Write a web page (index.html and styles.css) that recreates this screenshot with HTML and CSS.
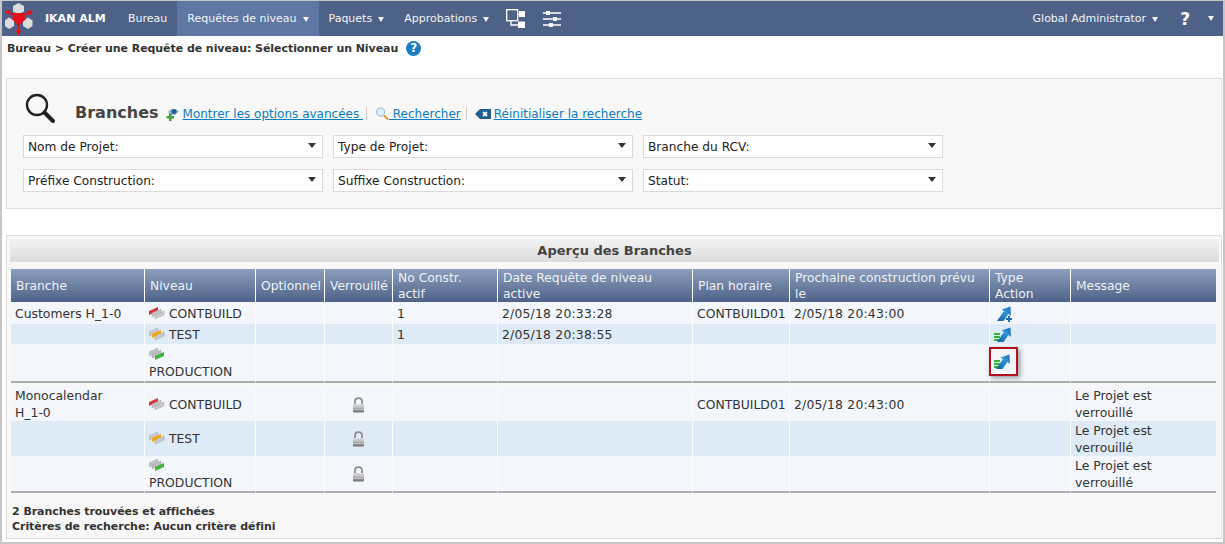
FILE: index.html
```html
<!DOCTYPE html>
<html lang="fr">
  <head>
    <meta charset="UTF-8" />
    <meta name="viewport" content="width=device-width, initial-scale=1.0" />
    <title>IKAN ALM</title>
    <link rel="stylesheet" href="styles.css">
  </head>
  <body>
    <svg class="defs" width="0" height="0">
      <defs>
        <linearGradient id="arrowFill" x1="0" y1="1" x2="1" y2="0">
          <stop offset="0" stop-color="#0f5f9e" />
          <stop offset="0.6" stop-color="#2f95d6" />
          <stop offset="1" stop-color="#1a6fb5" />
        </linearGradient>
        <linearGradient id="lockFill" x1="0" y1="0" x2="0" y2="1">
          <stop offset="0" stop-color="#e2e2e2" />
          <stop offset="0.5" stop-color="#a9a9a9" />
          <stop offset="1" stop-color="#6f6f6f" />
        </linearGradient>
        <symbol id="lvlRed" viewBox="0 0 16 12">
          <path d="M0 4 9 0 9 4 0 8Z" fill="#d8373a" />
          <path d="M3 6 12 2 12 6 3 10Z" fill="#c4c4c4" stroke="#9a9a9a" stroke-width=".4" />
          <path d="M6 8 15 4 15 8 6 12Z" fill="#c9c9c9" stroke="#9a9a9a" stroke-width=".4" />
        </symbol>
        <symbol id="lvlOrange" viewBox="0 0 16 12">
          <path d="M0 4 9 0 9 4 0 8Z" fill="#c9c9c9" stroke="#9a9a9a" stroke-width=".4" />
          <path d="M3 6 12 2 12 6 3 10Z" fill="#f5a811" />
          <path d="M6 8 15 4 15 8 6 12Z" fill="#c9c9c9" stroke="#9a9a9a" stroke-width=".4" />
        </symbol>
        <symbol id="lvlGreen" viewBox="0 0 16 12">
          <path d="M0 4 9 0 9 4 0 8Z" fill="#c4c4c4" stroke="#9a9a9a" stroke-width=".4" />
          <path d="M3 6 12 2 12 6 3 10Z" fill="#bdbdbd" stroke="#9a9a9a" stroke-width=".4" />
          <path d="M6 8 15 4 15 8 6 12Z" fill="#3fb53a" />
        </symbol>
        <symbol id="arrow" viewBox="0 0 16 16">
          <path d="M1 15 8 5 5.500 3.500 14.500 .5 15 10 12.500 8 7.500 15Z" fill="url(#arrowFill)" />
        </symbol>
        <symbol id="lock" viewBox="0 0 13 16">
          <path d="M3 7V4.500C3 2.500 4.500 1.200 6.500 1.200S10 2.500 10 4.500V7" fill="none" stroke="#8d8d8d" stroke-width="1.800" />
          <rect x="1" y="7" width="11" height="8.500" rx="1" fill="url(#lockFill)" />
          <path d="M1 10H12M1 12.500H12" stroke="#d6d6d6" stroke-width=".7" />
        </symbol>
      </defs>
    </svg>

    <div class="page">
      <!-- Top menu -->
      <nav class="topbar">
        <svg class="logo" width="30" height="34" viewBox="5 2 30 34">
          <path d="M18.500 3 24 6V11.500L18.500 14.500 13 11.500V6Z" fill="#dcdcdc" />
          <path d="M9 17.500 14 20.500V26L9 29 4.500 26V20.500Z" fill="#dcdcdc" />
          <path d="M28 17.500 32.500 20.500V26L28 29 23 26V20.500Z" fill="#dcdcdc" />
          <path d="M14 13H24L26 19 18.500 26 12 19Z" fill="#e3101c" />
          <path d="M14 15 7 12M24 15 31 12M18.500 24V32" stroke="#e3101c" stroke-width="2" />
          <path d="M5 10.500 10.500 10.500 7.500 15ZM33 10.500 27.500 10.500 30.500 15ZM15.500 30.500H21.500L18.500 35.500Z" fill="#e3101c" />
        </svg>
        <a class="brand">IKAN ALM</a>
        <a class="menu">Bureau</a>
        <a class="menu active">Requêtes de niveau <i class="caret"></i></a>
        <a class="menu">Paquets <i class="caret"></i></a>
        <a class="menu">Approbations <i class="caret"></i></a>
        <svg class="tool first" width="20" height="20" viewBox="0 0 20 20">
          <rect x=".7" y=".7" width="11" height="11" fill="none" stroke="#fff" stroke-width="1.300" />
          <rect x="13" y="2" width="6" height="6" fill="#fff" />
          <rect x="12" y="12.500" width="7" height="6.500" fill="#fff" />
          <path d="M5 12V16H12M12 5H13" fill="none" stroke="#fff" stroke-width="1.300" />
        </svg>
        <svg class="tool" width="18" height="18" viewBox="0 0 18 18">
          <path d="M0 3H18M0 9H18M0 15H18" stroke="#fff" stroke-width="1.300" />
          <rect x="3" y="1" width="4" height="4" fill="#fff" />
          <rect x="10" y="7" width="4" height="4" fill="#fff" />
          <rect x="6" y="13" width="4" height="4" fill="#fff" />
        </svg>
        <a class="menu user">Global Administrator <i class="caret"></i></a>
        <a class="question">?</a>
        <i class="caret help-caret"></i>
      </nav>

      <div class="crumbs">
        Bureau &gt; Créer une Requête de niveau: Sélectionner un Niveau
        <span class="help">?</span>
      </div>

      <!-- Search panel -->
      <section class="panel search">
        <div class="search-head">
          <svg class="loupe" width="30" height="30" viewBox="0 0 30 30">
            <circle cx="12" cy="12" r="10" fill="none" stroke="#222" stroke-width="2.400" />
            <path d="M19.500 19.500 28 28" stroke="#222" stroke-width="4" stroke-linecap="round" />
          </svg>
          <h2>Branches</h2>
          <a class="action">
            <svg width="16" height="15" viewBox="0 0 16 15">
              <path d="M4 6C6 2.500 11 2 15 5.500 12 9 8 9.500 6 8.500Z" fill="#8fb4d6" />
              <circle cx="10" cy="5.500" r="2.500" fill="#2b5f8f" />
              <path d="M2.500 10H5V7.500H7.500V10H10V12.500H7.500V15H5V12.500H2.500Z" fill="#3aa83a" />
            </svg><span>Montrer les options avancées </span>
          </a>
          <span class="sep"></span>
          <a class="action find">
            <svg width="14" height="15" viewBox="0 0 15 15">
              <circle cx="6" cy="6" r="4.500" fill="#dcecf8" stroke="#9ab4c8" />
              <path d="M9.500 9.500 14 14" stroke="#e69a2e" stroke-width="2.200" />
            </svg><span> Rechercher</span>
          </a>
          <span class="sep"></span>
          <a class="action reset">
            <svg width="17" height="12" viewBox="0 0 17 12">
              <path d="M5 1H16V11H5L0 6Z" fill="#1f5d8c" />
              <path d="M8 4 12 8M12 4 8 8" stroke="#fff" stroke-width="1.800" />
            </svg><span>Réinitialiser la recherche</span>
          </a>
        </div>
        <div class="filters">
          <div class="select">Nom de Projet:</div>
          <div class="select">Type de Projet:</div>
          <div class="select">Branche du RCV:</div>
          <div class="select">Préfixe Construction:</div>
          <div class="select">Suffixe Construction:</div>
          <div class="select">Statut:</div>
        </div>
      </section>

      <!-- Results -->
      <section class="panel results">
        <h3>Aperçu des Branches</h3>
        <table>
          <colgroup>
            <col class="c-branch" /><col class="c-level" /><col class="c-opt" /><col class="c-lock" /><col class="c-no" />
            <col class="c-date" /><col class="c-plan" /><col class="c-next" /><col class="c-type" /><col />
          </colgroup>
          <thead>
            <tr>
              <th>Branche</th>
              <th>Niveau</th>
              <th>Optionnel</th>
              <th>Verrouillé</th>
              <th>No Constr.<br />actif</th>
              <th>Date Requête de niveau<br />active</th>
              <th>Plan horaire</th>
              <th>Prochaine construction prévu<br />le</th>
              <th>Type<br />Action</th>
              <th>Message</th>
            </tr>
          </thead>
          <tbody>
            <tr class="h22">
              <td>Customers H_1-0</td>
              <td><svg class="lvl"><use href="#lvlRed" /></svg> CONTBUILD</td>
              <td></td>
              <td></td>
              <td>1</td>
              <td class="ts">2/05/18 20:33:28</td>
              <td>CONTBUILD01</td>
              <td class="ts">2/05/18 20:43:00</td>
              <td>
                <span class="act">
                  <svg width="16" height="16"><use href="#arrow" /></svg>
                  <i class="plus"></i>
                </span>
              </td>
              <td></td>
            </tr>
            <tr class="alt h20">
              <td></td>
              <td><svg class="lvl"><use href="#lvlOrange" /></svg> TEST</td>
              <td></td>
              <td></td>
              <td>1</td>
              <td class="ts">2/05/18 20:38:55</td>
              <td></td>
              <td></td>
              <td>
                <span class="act">
                  <i class="bars"></i>
                  <svg width="16" height="16"><use href="#arrow" /></svg>
                </span>
              </td>
              <td></td>
            </tr>
            <tr class="h39 group-end">
              <td></td>
              <td><svg class="lvl"><use href="#lvlGreen" /></svg><br />PRODUCTION</td>
              <td></td>
              <td></td>
              <td></td>
              <td></td>
              <td></td>
              <td></td>
              <td>
                <span class="act marked">
                  <i class="bars"></i>
                  <svg width="16" height="16"><use href="#arrow" /></svg>
                </span>
              </td>
              <td></td>
            </tr>
            <tr class="spacer"><td colspan="10"></td></tr>
            <tr class="h34">
              <td>Monocalendar<br />H_1-0</td>
              <td><svg class="lvl"><use href="#lvlRed" /></svg> CONTBUILD</td>
              <td></td>
              <td class="mid"><svg class="padlock"><use href="#lock" /></svg></td>
              <td></td>
              <td></td>
              <td>CONTBUILD01</td>
              <td class="ts">2/05/18 20:43:00</td>
              <td></td>
              <td>Le Projet est verrouillé</td>
            </tr>
            <tr class="alt h35">
              <td></td>
              <td><svg class="lvl"><use href="#lvlOrange" /></svg> TEST</td>
              <td></td>
              <td class="mid"><svg class="padlock"><use href="#lock" /></svg></td>
              <td></td>
              <td></td>
              <td></td>
              <td></td>
              <td></td>
              <td>Le Projet est verrouillé</td>
            </tr>
            <tr class="h37 group-end">
              <td></td>
              <td><svg class="lvl"><use href="#lvlGreen" /></svg><br />PRODUCTION</td>
              <td></td>
              <td class="mid"><svg class="padlock"><use href="#lock" /></svg></td>
              <td></td>
              <td></td>
              <td></td>
              <td></td>
              <td></td>
              <td>Le Projet est verrouillé</td>
            </tr>
          </tbody>
        </table>
        <p class="summary">
          2 Branches trouvées et affichées<br />
          Critères de recherche: Aucun critère défini
        </p>
      </section>
    </div>
  </body>
</html>
```

FILE: styles.css
```css
html,
body {
  margin: 0;
  padding: 0;
}
body {
  font-family: "DejaVu Sans", Verdana, sans-serif;
  font-size: 11px;
  color: #333;
  background: #fff;
}
.defs {
  position: absolute;
}
.page {
  box-sizing: border-box;
  width: 1225px;
  height: 544px;
  border: 2px solid #c6c6c6;
  border-top-width: 1px;
  overflow: hidden;
}

/* top menu */
.topbar {
  display: flex;
  align-items: center;
  height: 35px;
  background: #4e6288;
  color: #f2f4f8;
}
.logo {
  margin: 0 10px 0 3px;
}
.brand {
  width: 73px;
  font-weight: bold;
  color: #fff;
}
.menu {
  padding: 0 10px;
  line-height: 35px;
  white-space: nowrap;
}
.menu.active {
  background: #5e78a3;
}
.caret {
  display: inline-block;
  margin-left: 2.500px;
  vertical-align: middle;
  border-left: 3.500px solid transparent;
  border-right: 3.500px solid transparent;
  border-top: 5px solid #f2f4f8;
}
.tool.first {
  margin-left: 7px;
}
.tool {
  margin-right: 17px;
}
.user {
  margin-left: auto;
}
.question {
  margin-left: 12px;
  font-size: 17px;
  font-weight: bold;
  color: #fff;
}
.help-caret {
  margin: 0 9px 0 18px;
}

.crumbs {
  display: flex;
  align-items: center;
  gap: 8px;
  height: 24px;
  padding-left: 5px;
  font-weight: bold;
  letter-spacing: -0.06px;
  color: #333;
}
.help {
  width: 15px;
  height: 15px;
  border-radius: 50%;
  background: #1b7cc4;
  color: #fff;
  font-size: 12px;
  line-height: 15px;
  text-align: center;
}

/* panels */
.panel {
  box-sizing: border-box;
  margin: 18px 1px 0 4px;
  border: 1px solid #dddddd;
  background: #f8f8f8;
}
.search {
  height: 131px;
  padding: 13px 16px 0;
}
.search-head {
  display: flex;
  align-items: flex-end;
  height: 31px;
  padding-left: 2px;
}
.loupe {
  margin-right: 20px;
}
.search-head h2 {
  margin: 0 5px 0 0;
  font-size: 16px;
  line-height: 20px;
  color: #444;
}
.action {
  display: flex;
  align-items: center;
  height: 19px;
  font-size: 12px;
  color: #0b7cc1;
}
.action span {
  margin-left: 3px;
  text-decoration: underline;
  white-space: pre;
}
.action.find {
  margin-right: 2px;
}
.action.find span {
  margin-left: 0;
}
.action.reset span {
  margin-left: 2px;
}
.sep {
  width: 1px;
  height: 13px;
  margin: 0 8px 3px 3px;
  background: #ccc;
}
.filters {
  display: grid;
  grid-template-columns: repeat(3, 300px);
  gap: 11px 10px;
  margin-top: 12px;
}
.select {
  position: relative;
  box-sizing: border-box;
  height: 23px;
  padding-left: 4px;
  border: 1px solid #dadada;
  background: #fff;
  color: #222;
  font-size: 12.200px;
  line-height: 22px;
}
.select::after {
  content: "";
  position: absolute;
  right: 6px;
  top: 7px;
  border-left: 4px solid transparent;
  border-right: 4px solid transparent;
  border-top: 5px solid #333;
}

/* results */
.results {
  height: 304px;
  margin-top: 26px;
  padding: 3px 2px 0 3px;
}
.results h3 {
  margin: 0 0 7px;
  height: 23px;
  font-size: 13px;
  line-height: 23px;
  text-align: center;
  color: #444;
  background: linear-gradient(#f2f2f2, #dcdcdc);
}
table {
  width: 1205px;
  margin-left: 1px;
  table-layout: fixed;
  border-collapse: separate;
  border-spacing: 0;
}
.c-branch { width: 133px; }
.c-level { width: 111px; }
.c-opt { width: 69px; }
.c-lock { width: 68px; }
.c-no { width: 105px; }
.c-date { width: 195px; }
.c-plan { width: 97px; }
.c-next { width: 200px; }
.c-type { width: 81px; }
th {
  box-sizing: border-box;
  height: 33px;
  padding: 0 1px 0 5px;
  border-left: 1px solid #fff;
  background: linear-gradient(#8c9fbd, #4e6288);
  color: #eef1f6;
  font-size: 12.300px;
  font-weight: normal;
  line-height: 16px;
  text-align: left;
}
th:first-child,
td:first-child {
  border-left: 0;
}
td {
  box-sizing: border-box;
  padding: 0 4px 0 4px;
  border-left: 1px solid #fbfcfe;
  background: #f3f7fc;
  color: #333;
  font-size: 12.400px;
  line-height: 17px;
  vertical-align: middle;
}
td.ts {
  letter-spacing: 0.2px;
}
.alt td {
  background: #deeaf5;
}
.h22 td { height: 22px; }
.h20 td { height: 20px; }
.h34 td { height: 34px; }
.h35 td { height: 35px; }
.h37 td { height: 37px; }
.h39 td { height: 39px; }
.group-end td {
  border-bottom: 2px solid #aeaeae;
}
.spacer td {
  height: 4px;
  padding: 0;
  border: 0;
  background: #f8f8f8;
}
.mid {
  text-align: center;
}
.lvl {
  width: 16px;
  height: 12px;
  vertical-align: -1px;
}
.padlock {
  width: 13px;
  height: 16px;
  vertical-align: middle;
}
.act {
  position: relative;
  display: inline-block;
  width: 20px;
  height: 16px;
  vertical-align: middle;
}
.act svg {
  position: absolute;
  right: 2px;
  top: 0;
}
.plus {
  position: absolute;
  right: 2px;
  bottom: 0;
  width: 6px;
  height: 6px;
  background:
    linear-gradient(#1a6fb5, #1a6fb5) center / 6px 2px no-repeat,
    linear-gradient(#1a6fb5, #1a6fb5) center / 2px 6px no-repeat;
}
.bars {
  position: absolute;
  left: 0;
  top: 6px;
  width: 6px;
  height: 9px;
  background: repeating-linear-gradient(#35b535 0 2px, transparent 2px 3px);
}
.act.marked {
  box-sizing: border-box;
  top: -1px;
  width: 29px;
  height: 29px;
  margin-left: -5px;
  border: 2px solid #b3121d;
  box-shadow: 2px 2px 5px rgba(0, 0, 0, 0.4);
}
.act.marked svg {
  right: 5px;
  top: 5px;
}
.act.marked .bars {
  left: 3px;
  top: 11px;
}
.summary {
  margin: 11px 0 0 2px;
  font-weight: bold;
  letter-spacing: -0.05px;
  line-height: 15px;
  color: #333;
}
```
